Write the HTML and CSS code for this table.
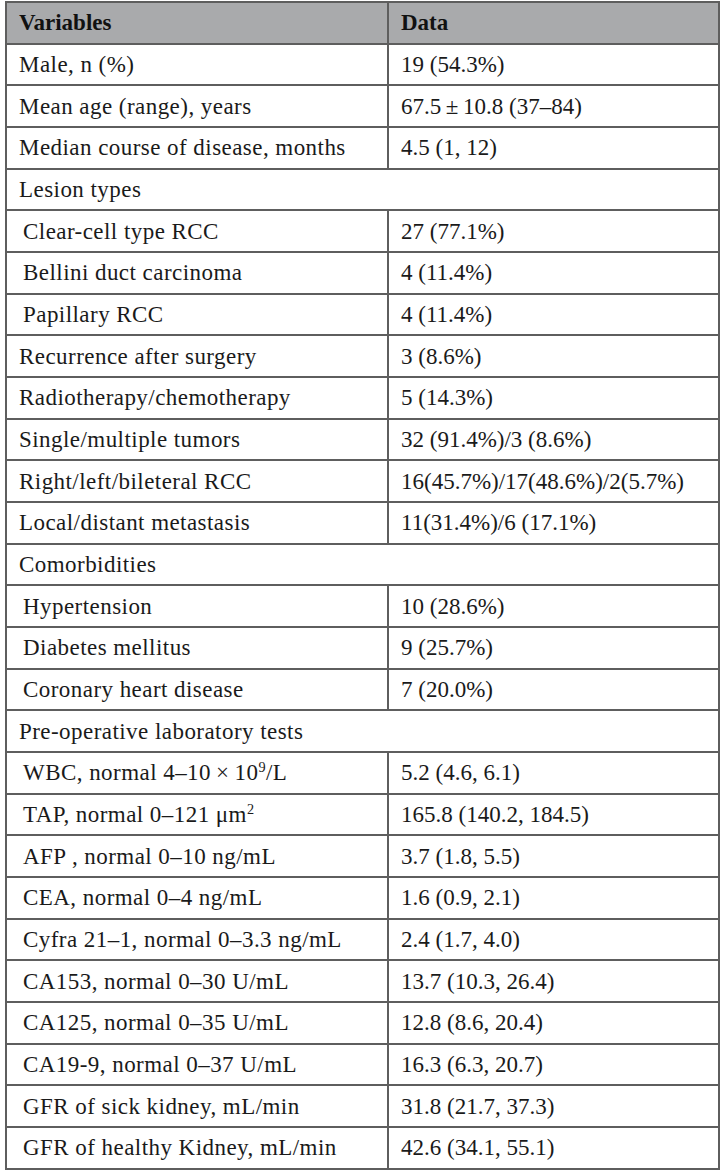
FILE: index.html
```html
<!DOCTYPE html>
<html lang="en">
<head>
<meta charset="utf-8">
<title>Patient characteristics</title>
<link rel="stylesheet" href="styles.css">
</head>
<body>
<table class="data-table">
  <colgroup>
    <col class="col-var">
    <col class="col-data">
  </colgroup>
  <thead>
    <tr class="head-row"><th>Variables</th><th>Data</th></tr>
  </thead>
  <tbody>
    <tr><td class="var">Male, n (%)</td><td>19 (54.3%)</td></tr>
    <tr><td class="var">Mean age (range), years</td><td>67.5&#8239;±&#8239;10.8 (37–84)</td></tr>
    <tr><td class="var">Median course of disease, months</td><td>4.5 (1, 12)</td></tr>
    <tr><td class="var" colspan="2">Lesion types</td></tr>
    <tr><td class="var sub">Clear-cell type RCC</td><td>27 (77.1%)</td></tr>
    <tr><td class="var sub">Bellini duct carcinoma</td><td>4 (11.4%)</td></tr>
    <tr><td class="var sub">Papillary RCC</td><td>4 (11.4%)</td></tr>
    <tr><td class="var">Recurrence after surgery</td><td>3 (8.6%)</td></tr>
    <tr><td class="var">Radiotherapy/chemotherapy</td><td>5 (14.3%)</td></tr>
    <tr><td class="var">Single/multiple tumors</td><td>32 (91.4%)/3 (8.6%)</td></tr>
    <tr><td class="var">Right/left/bileteral RCC</td><td>16(45.7%)/17(48.6%)/2(5.7%)</td></tr>
    <tr><td class="var">Local/distant metastasis</td><td>11(31.4%)/6 (17.1%)</td></tr>
    <tr><td class="var" colspan="2">Comorbidities</td></tr>
    <tr><td class="var sub">Hypertension</td><td>10 (28.6%)</td></tr>
    <tr><td class="var sub">Diabetes mellitus</td><td>9 (25.7%)</td></tr>
    <tr><td class="var sub">Coronary heart disease</td><td>7 (20.0%)</td></tr>
    <tr><td class="var" colspan="2">Pre-operative laboratory tests</td></tr>
    <tr><td class="var sub">WBC, normal 4–10&#8239;×&#8239;10<sup>9</sup>/L</td><td>5.2 (4.6, 6.1)</td></tr>
    <tr><td class="var sub">TAP, normal 0–121 μm<sup>2</sup></td><td>165.8 (140.2, 184.5)</td></tr>
    <tr><td class="var sub">AFP , normal 0–10 ng/mL</td><td>3.7 (1.8, 5.5)</td></tr>
    <tr><td class="var sub">CEA, normal 0–4 ng/mL</td><td>1.6 (0.9, 2.1)</td></tr>
    <tr><td class="var sub">Cyfra 21–1, normal 0–3.3 ng/mL</td><td>2.4 (1.7, 4.0)</td></tr>
    <tr><td class="var sub">CA153, normal 0–30 U/mL</td><td>13.7 (10.3, 26.4)</td></tr>
    <tr><td class="var sub">CA125, normal 0–35 U/mL</td><td>12.8 (8.6, 20.4)</td></tr>
    <tr><td class="var sub">CA19-9, normal 0–37 U/mL</td><td>16.3 (6.3, 20.7)</td></tr>
    <tr><td class="var sub">GFR of sick kidney, mL/min</td><td>31.8 (21.7, 37.3)</td></tr>
    <tr><td class="var sub">GFR of healthy Kidney, mL/min</td><td>42.6 (34.1, 55.1)</td></tr>
  </tbody>
</table>
</body>
</html>
```

FILE: styles.css
```css
html, body {
  margin: 0;
  padding: 0;
  background: #ffffff;
}

body {
  padding: 1px 0 0 5px;
  font-family: "Liberation Serif", "Times New Roman", serif;
  color: #1a1a1a;
}

.data-table {
  width: 713px;
  border-collapse: collapse;
  table-layout: fixed;
  border: 2px solid #6b6b6b;
  font-size: 23px;
}

.col-var {
  width: 382px;
}

.col-data {
  width: 331px;
}

.data-table th,
.data-table td {
  height: 41.68px;
  box-sizing: border-box;
  padding: 0 0 0 12px;
  border: 2px solid #5e5e5e;
  text-align: left;
  vertical-align: middle;
  line-height: 1;
  white-space: nowrap;
}

.head-row th {
  background: #a9aaac;
  font-weight: bold;
  color: #111111;
}

.data-table td.var {
  letter-spacing: 0.45px;
}

.data-table td.sub {
  padding-left: 16px;
}

.data-table sup {
  font-size: 0.62em;
  line-height: 0;
  vertical-align: 0.55em;
}
```
